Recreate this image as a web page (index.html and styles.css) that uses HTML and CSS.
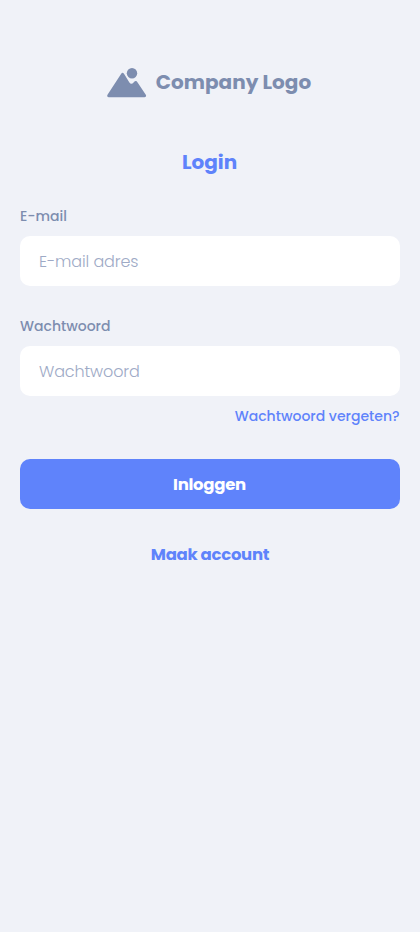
FILE: index.html
```html
<!DOCTYPE html>
<html lang="nl">
<head>
<meta charset="utf-8">
<meta name="viewport" content="width=device-width, initial-scale=1">
<title>Login</title>
<link rel="stylesheet" href="styles.css">
</head>
<body>
<main class="page">
  <header class="brand">
    <svg class="brand-icon" width="40" height="30" viewBox="0 0 40 30" aria-hidden="true">
      <circle cx="25" cy="5.2" r="5.2"/>
      <path d="M14.2 5.7Q15.5 3.9 17 5.7L22.4 14.4Q24.2 17.1 26.8 14.2Q29 11.9 30.6 14.5L38.8 26.8Q39.8 29 37.6 29.2H1.6Q-.5 29 .5 26.8Z"/>
    </svg>
    <span class="brand-name">Company Logo</span>
  </header>
  <h1 class="title">Login</h1>
  <form class="form">
    <label class="label label-email" for="email">E-mail</label>
    <input class="input input-email" id="email" type="email" placeholder="E-mail adres">
    <label class="label label-password" for="password">Wachtwoord</label>
    <input class="input input-password" id="password" type="password" placeholder="Wachtwoord">
    <a class="forgot" href="#">Wachtwoord vergeten?</a>
    <button class="submit" type="button">Inloggen</button>
  </form>
  <a class="create" href="#">Maak account</a>
</main>
</body>
</html>
```
FILE: styles.css
```css
* { box-sizing: border-box; }
body {
  margin: 0;
  background: #f0f2f8;
  color: #7d8daf;
  font-family: Poppins, Inter, sans-serif;
}
a { text-decoration: none; color: #5f83fb; }
.page {
  min-height: 100vh;
  padding: 67px 20px 0;
  display: flex;
  flex-direction: column;
}
.brand {
  height: 30px;
  display: flex;
  align-items: center;
  justify-content: center;
  gap: 9px;
  padding-right: 2px;
}
.brand-icon { fill: #7d8daf; position: relative; top: 1px; }
.brand-name { font-size: 20px; font-weight: 700; line-height: 30px; white-space: nowrap; }
.title {
  margin: 50px 0 0;
  padding-right: 1px;
  color: #5f83fb;
  text-align: center;
  font-size: 20px;
  font-weight: 700;
  line-height: 30px;
}
.form { display: flex; flex-direction: column; margin-top: 29px; }
.label { font-size: 14px; font-weight: 500; line-height: 20px; align-self: flex-start; }
.label-password { margin-top: 30px; }
.input {
  width: 100%;
  height: 50px;
  margin: 10px 0 0;
  padding: 0 19px;
  border: 0;
  border-radius: 10px;
  background: #fff;
  color: #7d8daf;
  font: 300 16px Poppins, Inter, sans-serif;
  letter-spacing: -.12px;
}
.input::placeholder { color: #9eaac6; opacity: 1; }
.forgot { align-self: flex-end; margin-top: 10px; padding-right: .5px; font-size: 14px; font-weight: 500; line-height: 20px; }
.submit {
  height: 50px;
  margin: 33px 0 0;
  padding: 0 1px 0 0;
  border: 0;
  border-radius: 10px;
  background: #5f83fb;
  color: #fff;
  font: 700 16.5px Poppins, Inter, sans-serif;
  letter-spacing: -.28px;
}
.create {
  align-self: center;
  margin-top: 33px;
  font-size: 16.5px;
  font-weight: 700;
  line-height: 26px;
  letter-spacing: -.3px;
}
```
